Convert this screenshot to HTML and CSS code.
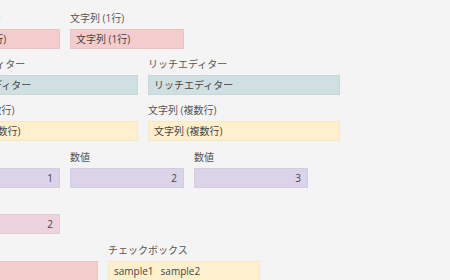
FILE: index.html
```html
<!DOCTYPE html>
<html lang="ja">
<head>
<meta charset="utf-8">
<link rel="stylesheet" href="styles.css">
</head>
<body>
<div class="form">
  <div class="row">
    <div class="field w114"><div class="label">文字列 (1行)</div><div class="box pink">文字列 (1行)</div></div>
    <div class="field w114"><div class="label">文字列 (1行)</div><div class="box pink">文字列 (1行)</div></div>
  </div>
  <div class="row">
    <div class="field w192"><div class="label">リッチエディター</div><div class="box teal">リッチエディター</div></div>
    <div class="field w192"><div class="label">リッチエディター</div><div class="box teal">リッチエディター</div></div>
  </div>
  <div class="row">
    <div class="field w192"><div class="label">文字列 (複数行)</div><div class="box yellow">文字列 (複数行)</div></div>
    <div class="field w192"><div class="label">文字列 (複数行)</div><div class="box yellow">文字列 (複数行)</div></div>
  </div>
  <div class="row extra">
    <div class="field w114"><div class="label">数値</div><div class="box purple num">1</div></div>
    <div class="field w114"><div class="label">数値</div><div class="box purple num">2</div></div>
    <div class="field w114"><div class="label">数値</div><div class="box purple num">3</div></div>
  </div>
  <div class="row">
    <div class="field w114"><div class="label">計算</div><div class="box mauve num">2</div></div>
  </div>
  <div class="row extra">
    <div class="field w152"><div class="label">ラジオ</div><div class="box rose"></div></div>
    <div class="field w152"><div class="label">チェックボックス</div><div class="box yellow">sample1<span class="sep"></span>sample2</div></div>
  </div>
</div>
</body>
</html>
```
FILE: styles.css
```css
html, body {
  margin: 0;
  padding: 0;
  background: #f4f4f4;
  overflow: hidden;
}
body {
  font-family: "Open Sans", "Noto Sans CJK JP", sans-serif;
  font-size: 10px;
  color: #555;
}
.form {
  margin-left: -54px;
  padding-top: 10px;
  display: flex;
  flex-direction: column;
  gap: 7px;
}
.row {
  display: flex;
  gap: 10px;
}
.row.extra {
  margin-top: 1px;
}
.field {
  display: flex;
  flex-direction: column;
  gap: 3px;
  flex: none;
}
.w114 { width: 114px; }
.w152 { width: 152px; }
.w192 { width: 192px; }
.label {
  height: 16px;
  line-height: 16px;
  white-space: nowrap;
  color: #555;
}
.box {
  box-sizing: border-box;
  height: 20px;
  line-height: 18px;
  padding: 0 6px 0 5px;
  border: 1px solid rgba(0, 0, 0, 0.035);
  white-space: nowrap;
  overflow: hidden;
  color: #444;
}
.num { text-align: right; }
.pink { background: #f3cccd; }
.teal { background: #d0dfe2; }
.yellow { background: #fff0cd; }
.purple { background: #dbd3e8; }
.mauve { background: #ecd3de; }
.rose { background: #f4cccc; }
.sep {
  display: inline-block;
  width: 7px;
}
```
